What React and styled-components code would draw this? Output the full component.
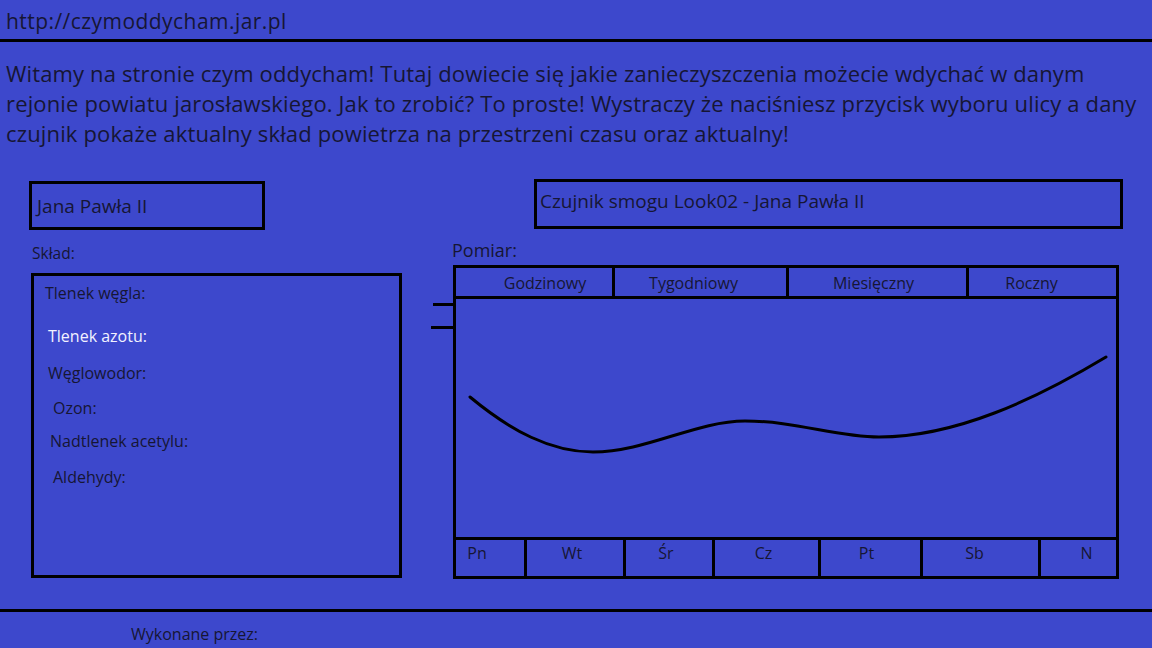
import React from 'react';
import styled, { createGlobalStyle } from 'styled-components';

const GlobalStyle = createGlobalStyle`
  html, body {
    margin: 0;
    padding: 0;
    background: #3d48cc;
  }
  body {
    font-family: "Open Sans", "Noto Sans", sans-serif;
    color: #161634;
  }
`;

const Page = styled.div`
  width: 1152px;
  height: 648px;
  overflow: hidden;
  background: #3d48cc;
  display: flex;
  flex-direction: column;
`;

const Header = styled.header`
  height: 42px;
  border-bottom: 3px solid #000;
  display: flex;
  align-items: center;
  padding: 3px 0 0 6px;
  box-sizing: border-box;
  font-size: 21px;
  letter-spacing: 0.45px;
`;

const Intro = styled.p`
  margin: 16px 0 0 6px;
  font-size: 22px;
  letter-spacing: 0.15px;
  line-height: 30px;
  white-space: nowrap;
`;

const Main = styled.main`
  display: flex;
  margin-top: 33px;
`;

const LeftCol = styled.section`
  display: flex;
  flex-direction: column;
  margin-left: 29px;
  width: 372px;
`;

const RightCol = styled.section`
  display: flex;
  flex-direction: column;
  margin-left: 30px;
`;

const Box = styled.div`
  border: 3px solid #000;
  box-sizing: border-box;
  display: flex;
  align-items: center;
  font-size: 19px;
`;

const StreetBox = styled(Box)`
  width: 236px;
  height: 49px;
  padding-left: 5px;
`;

const TitleBox = styled(Box)`
  width: 589px;
  height: 50px;
  margin-left: 103px;
  margin-top: -2px;
  padding: 0 0 6px 3px;
`;

const Label = styled.div`
  font-size: ${p => p.$size}px;
  line-height: 20px;
  margin-left: ${p => p.$indent}px;
  margin-top: ${p => p.$top}px;
`;

const CompBox = styled.div`
  border: 3px solid #000;
  box-sizing: border-box;
  width: 371px;
  height: 305px;
  margin-left: 2px;
  margin-top: 10px;
  padding-top: 7px;
  display: flex;
  flex-direction: column;
`;

const Item = styled.div`
  font-size: 16px;
  line-height: 20px;
  height: ${p => p.$h}px;
  padding-left: ${p => p.$indent}px;
  color: ${p => (p.$light ? '#f2f2ff' : '#161634')};
`;

const ChartRow = styled.div`
  display: flex;
  margin-top: 5px;
`;

const Ticks = styled.div`
  width: 22px;
  display: flex;
  flex-direction: column;
  align-items: flex-end;
  padding-top: 38px;
  gap: 20px;
`;

const Tick = styled.span`
  display: block;
  height: 3px;
  width: ${p => p.$w}px;
  background: #000;
`;

const Chart = styled.div`
  width: 666px;
  height: 314px;
  border: 3px solid #000;
  box-sizing: border-box;
  display: flex;
  flex-direction: column;
`;

const Tabs = styled.div`
  display: grid;
  grid-template-columns: 156px 174px 180px 1fr;
  height: 30px;
  border-bottom: 3px solid #000;
`;

const Tab = styled.div`
  display: flex;
  align-items: center;
  justify-content: center;
  font-size: 16px;
  padding-left: ${p => (p.$shift > 0 ? p.$shift : 0)}px;
  padding-right: ${p => (p.$shift < 0 ? -p.$shift : 0)}px;
  padding-top: 2px;
  & + & {
    border-left: 3px solid #000;
  }
`;

const Plot = styled.div`
  flex: 1;
  display: flex;
`;

const Curve = styled.svg`
  width: 100%;
  height: 100%;
`;

const Days = styled.div`
  display: grid;
  grid-template-columns: 68px 99px 89px 106px 102px 118px 1fr;
  height: 38px;
  border-top: 3px solid #000;
`;

const Day = styled.div`
  display: flex;
  align-items: flex-start;
  justify-content: center;
  padding-top: 2px;
  font-size: 16px;
  padding-left: ${p => (p.$shift > 0 ? p.$shift : 0)}px;
  padding-right: ${p => (p.$shift < 0 ? -p.$shift : 0)}px;
  & + & {
    border-left: 3px solid #000;
  }
`;

const Footer = styled.footer`
  margin-top: 30px;
  border-top: 3px solid #000;
  display: flex;
  flex-direction: column;
`;

const Credits = styled.div`
  font-size: 16px;
  line-height: 20px;
  margin: 12px 0 0 131px;
`;

const tabs = [
  { label: 'Godzinowy', shift: 22 },
  { label: 'Tygodniowy', shift: -14 },
  { label: 'Miesięczny', shift: -8 },
  { label: 'Roczny', shift: -22 },
];

const days = [
  { label: 'Pn', shift: -26 },
  { label: 'Wt', shift: -6 },
  { label: 'Śr', shift: -6 },
  { label: 'Cz', shift: -6 },
  { label: 'Pt', shift: -8 },
  { label: 'Sb', shift: -12 },
  { label: 'N', shift: 16 },
];

const items = [
  { label: 'Tlenek węgla:', indent: 11, h: 43 },
  { label: 'Tlenek azotu:', indent: 14, h: 37, light: true },
  { label: 'Węglowodor:', indent: 14, h: 35 },
  { label: 'Ozon:', indent: 19, h: 33 },
  { label: 'Nadtlenek acetylu:', indent: 16, h: 36 },
  { label: 'Aldehydy:', indent: 19, h: 30 },
];

export default function App() {
  return (
    <Page>
      <GlobalStyle />
      <Header>http://czymoddycham.jar.pl</Header>
      <Intro>
        Witamy na stronie czym oddycham! Tutaj dowiecie się jakie zanieczyszczenia możecie wdychać w danym<br />
        rejonie powiatu jarosławskiego. Jak to zrobić? To proste! Wystraczy że naciśniesz przycisk wyboru ulicy a dany<br />
        czujnik pokaże aktualny skład powietrza na przestrzeni czasu oraz aktualny!
      </Intro>
      <Main>
        <LeftCol>
          <StreetBox>Jana Pawła II</StreetBox>
          <Label $size={15.5} $indent={3} $top={13}>Skład:</Label>
          <CompBox>
            {items.map(it => (
              <Item key={it.label} $indent={it.indent} $h={it.h} $light={it.light}>
                {it.label}
              </Item>
            ))}
          </CompBox>
        </LeftCol>
        <RightCol>
          <TitleBox>Czujnik smogu Look02 - Jana Pawła II</TitleBox>
          <Label $size={18} $indent={21} $top={11}>Pomiar:</Label>
          <ChartRow>
            <Ticks>
              <Tick $w={20} />
              <Tick $w={22} />
            </Ticks>
            <Chart>
              <Tabs>
                {tabs.map(t => (
                  <Tab key={t.label} $shift={t.shift}>{t.label}</Tab>
                ))}
              </Tabs>
              <Plot>
                <Curve viewBox="0 0 660 238" preserveAspectRatio="none">
                  <path
                    d="M14 98 C 55 132, 95 153, 137 153 C 190 153, 240 122, 289 122 C 340 122, 380 138, 423 138 C 500 138, 580 100, 650 58"
                    fill="none"
                    stroke="#000"
                    strokeWidth="3"
                    strokeLinecap="round"
                  />
                </Curve>
              </Plot>
              <Days>
                {days.map(d => (
                  <Day key={d.label} $shift={d.shift}>{d.label}</Day>
                ))}
              </Days>
            </Chart>
          </ChartRow>
        </RightCol>
      </Main>
      <Footer>
        <Credits>Wykonane przez:</Credits>
      </Footer>
    </Page>
  );
}
